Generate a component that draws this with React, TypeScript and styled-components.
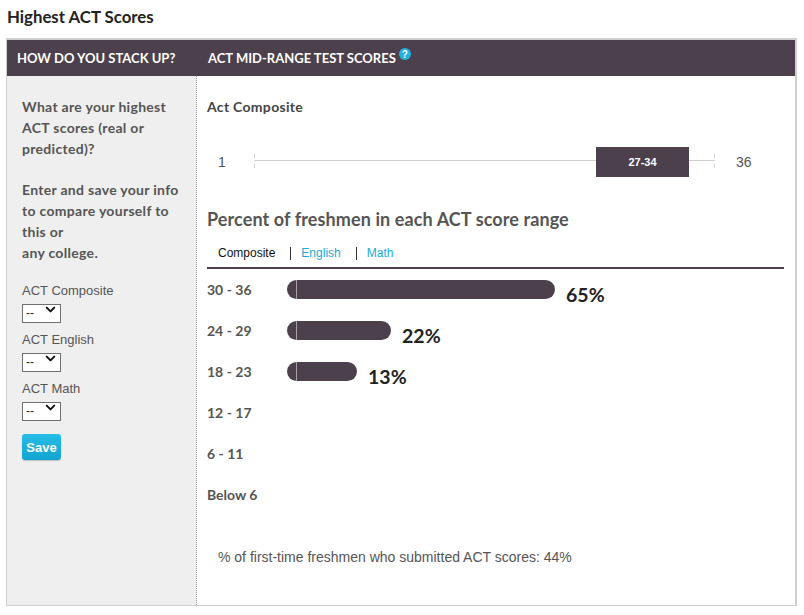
import React from 'react';
import styled, { createGlobalStyle } from 'styled-components';
import { ChevronDown } from 'lucide-react';

const GlobalStyle = createGlobalStyle`
  html, body {
    margin: 0;
    padding: 0;
    background: #fff;
  }
  body {
    font-family: Lato, "Open Sans", sans-serif;
  }
`;

const DARK = '#4c404c';
const CYAN = '#1aabd8';

type TRange = { label: string; percent: number; width: number };

const ranges: TRange[] = [
  { label: '30 - 36', percent: 65, width: 268 },
  { label: '24 - 29', percent: 22, width: 104 },
  { label: '18 - 23', percent: 13, width: 70 },
  { label: '12 - 17', percent: 0, width: 0 },
  { label: '6 - 11', percent: 0, width: 0 },
  { label: 'Below 6', percent: 0, width: 0 },
];

const scoreFields = ['ACT Composite', 'ACT English', 'ACT Math'];

const App = () => {
  const min = 1;
  const max = 36;
  const low = 27;
  const high = 34;
  const left = ((low - min) / (max - min)) * 100;
  const span = ((high - low) / (max - min)) * 100;

  return (
    <>
      <GlobalStyle />
      <Page>
        <Title>Highest ACT Scores</Title>
        <Box>
          <Header>
            <HeaderCell>HOW DO YOU STACK UP?</HeaderCell>
            <HeaderCell $wide>
              ACT MID-RANGE TEST SCORES
              <HelpIcon>?</HelpIcon>
            </HeaderCell>
          </Header>
          <Body>
            <Sidebar>
              <Prompt>What are your highest ACT scores (real or predicted)?</Prompt>
              <Prompt>
                Enter and save your info to compare yourself to this or
                <br />
                any college.
              </Prompt>
              <Fields>
                {scoreFields.map((name) => (
                  <Field key={name}>
                    <FieldLabel>{name}</FieldLabel>
                    <SelectWrap>
                      <Select defaultValue="--">
                        <option>--</option>
                      </Select>
                      <Chevron size={15} strokeWidth={3.2} />
                    </SelectWrap>
                  </Field>
                ))}
              </Fields>
              <SaveButton>Save</SaveButton>
            </Sidebar>
            <Content>
              <SectionLabel>Act Composite</SectionLabel>
              <RangeRow>
                <RangeEnd>1</RangeEnd>
                <Track>
                  <MidBox style={{ left: `${left}%`, width: `${span}%` }}>27-34</MidBox>
                </Track>
                <RangeEnd $right>36</RangeEnd>
              </RangeRow>
              <ChartTitle>Percent of freshmen in each ACT score range</ChartTitle>
              <Tabs>
                <Tab $active>Composite</Tab>
                <Tab $divider>English</Tab>
                <Tab $divider>Math</Tab>
              </Tabs>
              <Bars>
                {ranges.map((r) => (
                  <BarRow key={r.label}>
                    <BarLabel>{r.label}</BarLabel>
                    {r.percent > 0 && (
                      <>
                        <Bar style={{ width: r.width }} />
                        <Percent>{r.percent}%</Percent>
                      </>
                    )}
                  </BarRow>
                ))}
              </Bars>
              <Footnote>% of first-time freshmen who submitted ACT scores: 44%</Footnote>
            </Content>
          </Body>
        </Box>
      </Page>
    </>
  );
};

export default App;

const Page = styled.div`
  width: 791px;
  padding: 0 0 0 6px;
`;

const Title = styled.h2`
  margin: 0;
  padding: 8px 0 0 1px;
  height: 38px;
  box-sizing: border-box;
  font-size: 16.8px;
  font-weight: 700;
  color: #222;
  line-height: 18px;
`;

const Box = styled.div`
  border: 1px solid #cfcfcf;
  border-top-width: 2px;
  border-right-width: 2px;
`;

const Header = styled.div`
  display: grid;
  grid-template-columns: 190px 1fr;
  height: 36px;
  background: ${DARK};
  align-items: center;
`;

const HeaderCell = styled.div<{ $wide?: boolean }>`
  display: flex;
  align-items: center;
  padding-left: ${(p) => (p.$wide ? '11px' : '10px')};
  color: #fff;
  font-size: 13px;
  font-weight: 700;
  margin-top: -1px;
`;

const HelpIcon = styled.span`
  display: inline-flex;
  align-items: center;
  justify-content: center;
  width: 12px;
  height: 12px;
  margin: -7px 0 0 3px;
  border-radius: 50%;
  background: #22b0e0;
  color: #fff;
  font-size: 10px;
  font-weight: 900;
  font-family: Arial, "Liberation Sans", sans-serif;
`;

const Body = styled.div`
  display: grid;
  grid-template-columns: 190px 1fr;
`;

const Sidebar = styled.div`
  background: #efefef;
  border-right: 1px dotted #9a9a9a;
  padding: 20px 10px 0 15px;
`;

const Prompt = styled.p`
  margin: 0 0 20px;
  max-width: 162px;
  font-size: 14px;
  font-weight: 700;
  letter-spacing: 0.3px;
  line-height: 21px;
  color: #555;
`;

const Fields = styled.div`
  display: flex;
  flex-direction: column;
  gap: 12px;
  margin-top: 7px;
`;

const Field = styled.div`
  display: flex;
  flex-direction: column;
  align-items: flex-start;
  gap: 2px;
`;

const FieldLabel = styled.div`
  font-family: Arial, "Liberation Sans", sans-serif;
  font-size: 13px;
  line-height: 16px;
  color: #555;
`;

const SelectWrap = styled.div`
  position: relative;
  width: 39px;
  height: 19px;
`;

const Select = styled.select`
  appearance: none;
  width: 39px;
  height: 19px;
  box-sizing: border-box;
  border: 1px solid #707070;
  border-radius: 0;
  background: #fff;
  padding: 0 0 0 3px;
  font-family: Arial, "Liberation Sans", sans-serif;
  font-size: 12px;
  color: #222;
`;

const Chevron = styled(ChevronDown)`
  position: absolute;
  right: 3px;
  top: 1px;
  color: #111;
  pointer-events: none;
`;

const SaveButton = styled.button`
  margin-top: 16px;
  width: 39px;
  height: 26px;
  border: none;
  border-radius: 3px;
  background: linear-gradient(#25bde6, #12a4d2);
  box-shadow: 0 1px 1px rgba(0, 0, 0, 0.2);
  color: #fff;
  font-family: Arial, "Liberation Sans", sans-serif;
  font-weight: 700;
  font-size: 13px;
  padding: 0;
`;

const Content = styled.div`
  padding: 20px 11px 40px 10px;
`;

const SectionLabel = styled.div`
  font-size: 14px;
  font-weight: 700;
  letter-spacing: 0.3px;
  line-height: 21px;
  color: #444;
`;

const RangeRow = styled.div`
  display: grid;
  grid-template-columns: 47px 461px auto;
  align-items: center;
  height: 30px;
  margin-top: 30px;
`;

const RangeEnd = styled.span<{ $right?: boolean }>`
  padding-left: ${(p) => (p.$right ? '21px' : '11px')};
  font-family: Arial, "Liberation Sans", sans-serif;
  font-size: 14px;
  color: #555;
`;

const Track = styled.div`
  position: relative;
  height: 30px;
  background:
    linear-gradient(#d0d0d0, #d0d0d0) left 13px / 100% 1px no-repeat,
    linear-gradient(#d0d0d0, #d0d0d0) left 7px / 1px 4px no-repeat,
    linear-gradient(#d0d0d0, #d0d0d0) left 17px / 1px 4px no-repeat,
    linear-gradient(#d0d0d0, #d0d0d0) right 7px / 1px 4px no-repeat,
    linear-gradient(#d0d0d0, #d0d0d0) right 17px / 1px 4px no-repeat;
`;

const MidBox = styled.div`
  position: absolute;
  top: 0;
  height: 30px;
  display: flex;
  align-items: center;
  justify-content: center;
  background: ${DARK};
  color: #fff;
  font-family: Arial, "Liberation Sans", sans-serif;
  font-size: 11px;
  font-weight: 700;
`;

const ChartTitle = styled.div`
  margin-top: 30px;
  font-size: 18px;
  font-weight: 700;
  letter-spacing: 0.1px;
  line-height: 24px;
  color: #555;
`;

const Tabs = styled.div`
  display: flex;
  align-items: center;
  margin-top: 14px;
  padding: 0 0 6px 11px;
  border-bottom: 2px solid ${DARK};
`;

const Tab = styled.span<{ $active?: boolean; $divider?: boolean }>`
  font-family: Arial, "Liberation Sans", sans-serif;
  font-size: 12px;
  line-height: 16px;
  color: ${(p) => (p.$active ? '#111' : CYAN)};
  ${(p) =>
    p.$divider &&
    `
    margin-left: 15px;
    padding-left: 10px;
    border-left: 1px solid #333;
    line-height: 13px;
  `}
`;

const Bars = styled.div`
  display: flex;
  flex-direction: column;
`;

const BarRow = styled.div`
  display: flex;
  align-items: center;
  height: 41px;
`;

const BarLabel = styled.span`
  width: 80px;
  font-size: 14px;
  font-weight: 700;
  color: #555;
`;

const Bar = styled.div`
  height: 19px;
  border-radius: 10px;
  background:
    linear-gradient(to right, transparent 9px, #a89fa8 9px, #a89fa8 10px, transparent 10px),
    ${DARK};
`;

const Percent = styled.span`
  margin-left: 11px;
  padding-top: 10px;
  font-size: 19.5px;
  font-weight: 700;
  color: #222;
`;

const Footnote = styled.div`
  margin-top: 34px;
  padding-left: 11px;
  font-family: Arial, "Liberation Sans", sans-serif;
  font-size: 14px;
  line-height: 16px;
  color: #555;
`;
